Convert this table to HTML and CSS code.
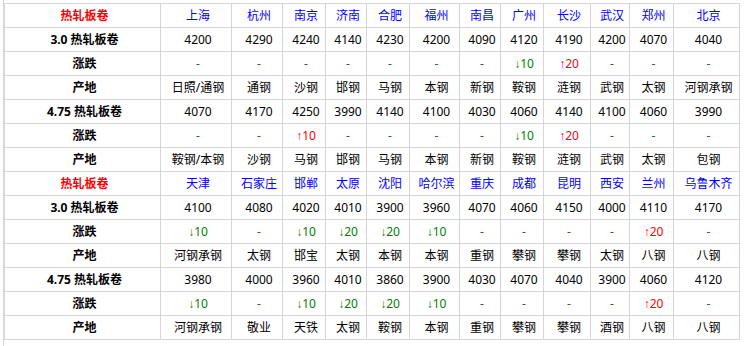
FILE: index.html
```html
<!DOCTYPE html>
<html lang="zh-CN">
<head>
<meta charset="utf-8">
<title>热轧板卷价格</title>
<link rel="stylesheet" href="styles.css">
</head>
<body>
<div class="wrap">
<table class="price">
<colgroup>
<col><col><col><col><col><col><col><col><col><col><col><col><col>
</colgroup>
<tbody>
<tr>
<td class="lbl red">热轧板卷</td>
<td class="city">上海</td><td class="city">杭州</td><td class="city">南京</td><td class="city">济南</td><td class="city">合肥</td><td class="city">福州</td><td class="city">南昌</td><td class="city">广州</td><td class="city">长沙</td><td class="city">武汉</td><td class="city">郑州</td><td class="city">北京</td>
</tr>
<tr>
<td class="lbl">3.0 热轧板卷</td>
<td>4200</td><td>4290</td><td>4240</td><td>4140</td><td>4230</td><td>4200</td><td>4090</td><td>4120</td><td>4190</td><td>4200</td><td>4070</td><td>4040</td>
</tr>
<tr>
<td class="lbl">涨跌</td>
<td class="flat">-</td><td class="flat">-</td><td class="flat">-</td><td class="flat">-</td><td class="flat">-</td><td class="flat">-</td><td class="flat">-</td><td class="dn"><span class="arr">↓</span>10</td><td class="up"><span class="arr">↑</span>20</td><td class="flat">-</td><td class="flat">-</td><td class="flat">-</td>
</tr>
<tr>
<td class="lbl">产地</td>
<td>日照/通钢</td><td>通钢</td><td>沙钢</td><td>邯钢</td><td>马钢</td><td>本钢</td><td>新钢</td><td>鞍钢</td><td>涟钢</td><td>武钢</td><td>太钢</td><td>河钢承钢</td>
</tr>
<tr>
<td class="lbl">4.75 热轧板卷</td>
<td>4070</td><td>4170</td><td>4250</td><td>3990</td><td>4140</td><td>4100</td><td>4030</td><td>4060</td><td>4140</td><td>4100</td><td>4060</td><td>3990</td>
</tr>
<tr>
<td class="lbl">涨跌</td>
<td class="flat">-</td><td class="flat">-</td><td class="up"><span class="arr">↑</span>10</td><td class="flat">-</td><td class="flat">-</td><td class="flat">-</td><td class="flat">-</td><td class="dn"><span class="arr">↓</span>10</td><td class="up"><span class="arr">↑</span>20</td><td class="flat">-</td><td class="flat">-</td><td class="flat">-</td>
</tr>
<tr>
<td class="lbl">产地</td>
<td>鞍钢/本钢</td><td>沙钢</td><td>马钢</td><td>邯钢</td><td>马钢</td><td>本钢</td><td>新钢</td><td>鞍钢</td><td>涟钢</td><td>武钢</td><td>太钢</td><td>包钢</td>
</tr>
<tr>
<td class="lbl red">热轧板卷</td>
<td class="city">天津</td><td class="city">石家庄</td><td class="city">邯郸</td><td class="city">太原</td><td class="city">沈阳</td><td class="city">哈尔滨</td><td class="city">重庆</td><td class="city">成都</td><td class="city">昆明</td><td class="city">西安</td><td class="city">兰州</td><td class="city">乌鲁木齐</td>
</tr>
<tr>
<td class="lbl">3.0 热轧板卷</td>
<td>4100</td><td>4080</td><td>4020</td><td>4010</td><td>3900</td><td>3960</td><td>4070</td><td>4060</td><td>4150</td><td>4000</td><td>4110</td><td>4170</td>
</tr>
<tr>
<td class="lbl">涨跌</td>
<td class="dn"><span class="arr">↓</span>10</td><td class="flat">-</td><td class="dn"><span class="arr">↓</span>10</td><td class="dn"><span class="arr">↓</span>20</td><td class="dn"><span class="arr">↓</span>20</td><td class="dn"><span class="arr">↓</span>10</td><td class="flat">-</td><td class="flat">-</td><td class="flat">-</td><td class="flat">-</td><td class="up"><span class="arr">↑</span>20</td><td class="flat">-</td>
</tr>
<tr>
<td class="lbl">产地</td>
<td>河钢承钢</td><td>太钢</td><td>邯宝</td><td>太钢</td><td>本钢</td><td>本钢</td><td>重钢</td><td>攀钢</td><td>攀钢</td><td>太钢</td><td>八钢</td><td>八钢</td>
</tr>
<tr>
<td class="lbl">4.75 热轧板卷</td>
<td>3980</td><td>4000</td><td>3960</td><td>4010</td><td>3860</td><td>3900</td><td>4030</td><td>4070</td><td>4040</td><td>3900</td><td>4060</td><td>4120</td>
</tr>
<tr>
<td class="lbl">涨跌</td>
<td class="dn"><span class="arr">↓</span>10</td><td class="flat">-</td><td class="dn"><span class="arr">↓</span>10</td><td class="dn"><span class="arr">↓</span>20</td><td class="dn"><span class="arr">↓</span>20</td><td class="dn"><span class="arr">↓</span>10</td><td class="flat">-</td><td class="flat">-</td><td class="flat">-</td><td class="flat">-</td><td class="up"><span class="arr">↑</span>20</td><td class="flat">-</td>
</tr>
<tr>
<td class="lbl">产地</td>
<td>河钢承钢</td><td>敬业</td><td>天铁</td><td>太钢</td><td>鞍钢</td><td>本钢</td><td>重钢</td><td>攀钢</td><td>攀钢</td><td>酒钢</td><td>八钢</td><td>八钢</td>
</tr>
</tbody>
</table>
</div>
</body>
</html>
```

FILE: styles.css
```css
html, body {
  margin: 0;
  padding: 0;
  background: #ffffff;
}

body {
  font-family: "Noto Sans", "Noto Sans CJK SC", sans-serif;
  font-size: 12px;
  color: #000000;
}

.wrap {
  box-sizing: border-box;
  height: 346px;
  margin-left: 3px;
  padding-top: 3px;
  border-left: 1px solid #d9d9d9;
  overflow: hidden;
}

.price {
  border-collapse: collapse;
  table-layout: fixed;
  width: 736px;
}

.price col:nth-child(1) { width: 156px; }
.price col:nth-child(2) { width: 71px; }
.price col:nth-child(3) { width: 51px; }
.price col:nth-child(4) { width: 43px; }
.price col:nth-child(5) { width: 41px; }
.price col:nth-child(6) { width: 43px; }
.price col:nth-child(7) { width: 50px; }
.price col:nth-child(8) { width: 41px; }
.price col:nth-child(9) { width: 43px; }
.price col:nth-child(10) { width: 47px; }
.price col:nth-child(11) { width: 39px; }
.price col:nth-child(12) { width: 44px; }
.price col:nth-child(13) { width: 66px; }

.price td {
  border: 1px solid #d6d6d6;
  height: 23px;
  padding: 0 0 0 4px;
  text-align: center;
  vertical-align: middle;
  white-space: nowrap;
  line-height: 16px;
}

.price .lbl {
  font-weight: bold;
}

.price .red {
  color: #ff0000;
}

.price .city {
  color: #0000ff;
}

.price .flat,
.price .dn {
  color: #008000;
}

.price .up {
  color: #ff0000;
}

.arr {
  font-family: "Liberation Sans", sans-serif;
}
```
